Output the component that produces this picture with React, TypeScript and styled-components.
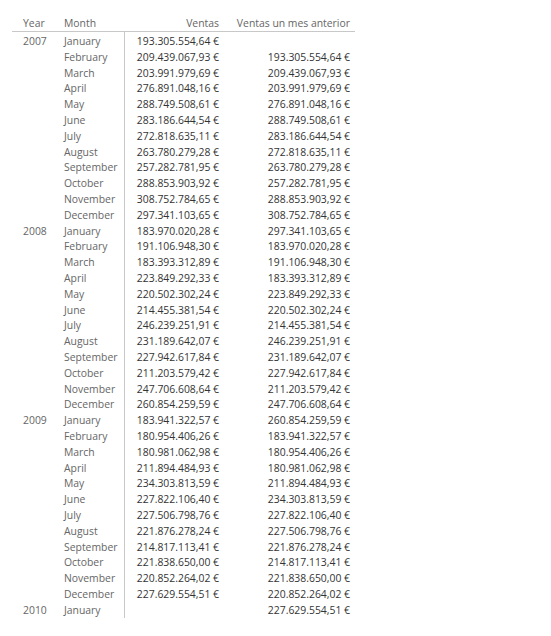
import { Fragment } from "react";
import styled, { createGlobalStyle } from "styled-components";

const GlobalStyle = createGlobalStyle`
  html, body {
    margin: 0;
    padding: 0;
    background: #ffffff;
  }
  body {
    font-family: "Open Sans", "Noto Sans", sans-serif;
  }
`;

const Page = styled.div`
  width: 551px;
  height: 636px;
  padding: 12px 0 0 12px;
  box-sizing: border-box;
`;

const Matrix = styled.div`
  display: grid;
  grid-template-columns: 46px 66px 101px 130px;
  font-size: 10.4px;
  width: 343px;
`;

const HeadCell = styled.div<{ right?: boolean; pad: number }>`
  height: 15px;
  line-height: 15px;
  padding-top: 4px;
  color: #666666;
  border-bottom: 1px solid #c8c8c8;
  white-space: nowrap;
  text-align: ${(p) => (p.right ? "right" : "left")};
  padding-left: ${(p) => (p.right ? 0 : p.pad)}px;
  padding-right: ${(p) => (p.right ? p.pad : 0)}px;
`;

const LabelCell = styled.div<{ pad: number; first?: boolean }>`
  height: 15.8px;
  line-height: 15.8px;
  color: #666666;
  white-space: nowrap;
  padding-left: ${(p) => p.pad}px;
  padding-top: ${(p) => (p.first ? 2 : 0)}px;
`;

const ValueCell = styled.div<{ pad: number; first?: boolean; divider?: boolean }>`
  height: 15.8px;
  line-height: 15.8px;
  color: #333333;
  text-align: right;
  white-space: nowrap;
  padding-right: ${(p) => p.pad}px;
  padding-top: ${(p) => (p.first ? 2 : 0)}px;
  border-left: ${(p) => (p.divider ? "1px solid #c8c8c8" : "none")};
`;

const months = [
  "January",
  "February",
  "March",
  "April",
  "May",
  "June",
  "July",
  "August",
  "September",
  "October",
  "November",
  "December",
];

const ventas = [
  "193.305.554,64",
  "209.439.067,93",
  "203.991.979,69",
  "276.891.048,16",
  "288.749.508,61",
  "283.186.644,54",
  "272.818.635,11",
  "263.780.279,28",
  "257.282.781,95",
  "288.853.903,92",
  "308.752.784,65",
  "297.341.103,65",
  "183.970.020,28",
  "191.106.948,30",
  "183.393.312,89",
  "223.849.292,33",
  "220.502.302,24",
  "214.455.381,54",
  "246.239.251,91",
  "231.189.642,07",
  "227.942.617,84",
  "211.203.579,42",
  "247.706.608,64",
  "260.854.259,59",
  "183.941.322,57",
  "180.954.406,26",
  "180.981.062,98",
  "211.894.484,93",
  "234.303.813,59",
  "227.822.106,40",
  "227.506.798,76",
  "221.876.278,24",
  "214.817.113,41",
  "221.838.650,00",
  "220.852.264,02",
  "227.629.554,51",
];

// one row per month, plus January 2010 which only has last month's value
const rows = [...ventas, ""].map((v, i) => ({
  year: i % 12 === 0 ? String(2007 + i / 12) : "",
  month: months[i % 12],
  ventas: v,
  anterior: i > 0 ? ventas[i - 1] : "",
}));

function App() {
  return (
    <>
      <GlobalStyle />
      <Page>
        <Matrix>
          <HeadCell pad={11}>Year</HeadCell>
          <HeadCell pad={6}>Month</HeadCell>
          <HeadCell right pad={6}>
            Ventas
          </HeadCell>
          <HeadCell right pad={5}>
            Ventas un mes anterior
          </HeadCell>
          {rows.map((r, i) => (
            <Fragment key={i}>
              <LabelCell pad={11} first={i === 0}>
                {r.year}
              </LabelCell>
              <LabelCell pad={6} first={i === 0}>
                {r.month}
              </LabelCell>
              <ValueCell pad={6} first={i === 0} divider>
                {r.ventas && `${r.ventas} €`}
              </ValueCell>
              <ValueCell pad={5} first={i === 0}>
                {r.anterior && `${r.anterior} €`}
              </ValueCell>
            </Fragment>
          ))}
        </Matrix>
      </Page>
    </>
  );
}

export default App;
